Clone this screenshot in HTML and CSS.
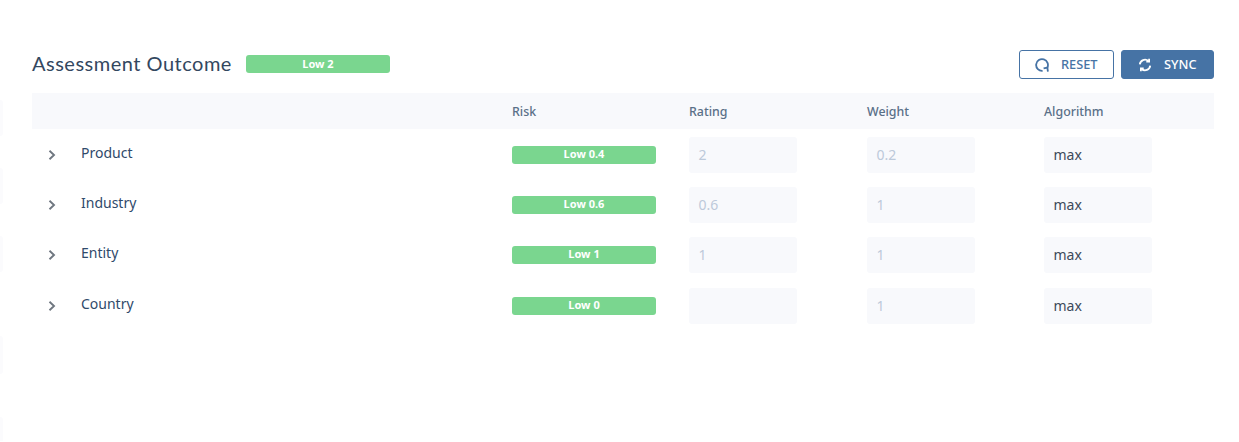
FILE: index.html
```html
<!DOCTYPE html>
<html lang="en">
<head>
<meta charset="utf-8">
<title>Assessment Outcome</title>
<link rel="stylesheet" href="styles.css">
</head>
<body>
<div class="edge"><i></i><i></i><i></i><i></i><i></i></div>
<main class="panel">
  <header class="head">
    <h1 class="title">Assessment Outcome</h1>
    <span class="badge badge-main">Low 2</span>
    <div class="actions">
      <button class="btn btn-outline"><svg class="ic" viewBox="0 0 14 14"><path d="M7.6 12.9A5.9 5.9 0 1 1 12.2 9.9"/><path d="M12.9 13.6 12.4 9.6 8.6 10.4"/></svg>RESET</button>
      <button class="btn btn-solid"><svg class="ic" viewBox="0 0 14 14"><path d="M1.8 6.4A5.2 5.2 0 0 1 10.4 3"/><path d="M11.1 .8V3.7H8.3"/><path d="M12.2 7.6A5.2 5.2 0 0 1 3.6 11"/><path d="M2.9 13.2V10.3H5.7"/></svg>SYNC</button>
    </div>
  </header>
  <div class="row row-head">
    <span></span><span>Risk</span><span>Rating</span><span>Weight</span><span>Algorithm</span>
  </div>
  <div class="row item">
    <div class="name"><svg class="chev" viewBox="0 0 8 12"><path d="M1.5 1.8 6 6 1.5 10.2"/></svg><span>Product</span></div>
    <span class="badge">Low 0.4</span>
    <div class="field muted">2</div><div class="field muted">0.2</div><div class="field">max</div>
  </div>
  <div class="row item">
    <div class="name"><svg class="chev" viewBox="0 0 8 12"><path d="M1.5 1.8 6 6 1.5 10.2"/></svg><span>Industry</span></div>
    <span class="badge">Low 0.6</span>
    <div class="field muted">0.6</div><div class="field muted">1</div><div class="field">max</div>
  </div>
  <div class="row item">
    <div class="name"><svg class="chev" viewBox="0 0 8 12"><path d="M1.5 1.8 6 6 1.5 10.2"/></svg><span>Entity</span></div>
    <span class="badge">Low 1</span>
    <div class="field muted">1</div><div class="field muted">1</div><div class="field">max</div>
  </div>
  <div class="row item">
    <div class="name"><svg class="chev" viewBox="0 0 8 12"><path d="M1.5 1.8 6 6 1.5 10.2"/></svg><span>Country</span></div>
    <span class="badge">Low 0</span>
    <div class="field muted"></div><div class="field muted">1</div><div class="field">max</div>
  </div>
</main>
</body>
</html>
```
FILE: styles.css
```css
* { box-sizing: border-box; }
html, body { margin: 0; background: #fff; }
body { position: relative; height: 442px; overflow: hidden; font-family: "Noto Sans", "Open Sans", sans-serif; color: #2f4a6b; }
.edge { position: absolute; left: 0; top: 100px; width: 3px; height: 342px; overflow: hidden; display: flex; flex-direction: column; }
.edge i { display: block; flex: none; height: 36px; margin-bottom: 32px; background: #fbfbfd; border-radius: 0 3px 3px 0; }
.edge i:nth-child(3) { margin-bottom: 64px; }
.edge i:nth-child(4) { height: 38px; margin-bottom: 43px; }
.edge i:nth-child(5) { height: 24px; margin-bottom: 0; border-bottom-right-radius: 0; }
.panel { padding: 50px 25px 0 32px; }
.head { display: flex; align-items: center; height: 29px; margin-bottom: 14px; }
.title { margin: 0 14px 2px 0; font: 400 20px/29px Lato, sans-serif; color: #33475f; letter-spacing: .5px; }
.badge { display: block; width: 144px; height: 18px; border-radius: 3px; background: #7ad68f; color: #fff; font: 700 11px/15px "Noto Sans", sans-serif; text-align: center; }
.badge-main { margin-bottom: 2px; line-height: 17px; }
.actions { margin-left: auto; display: flex; gap: 7px; }
.btn { display: flex; align-items: center; justify-content: center; height: 29px; border-radius: 3px; font: 500 12.8px/1 "Noto Sans", sans-serif; padding: 0; }
.btn-outline { width: 95px; background: #fff; color: #4673a5; border: 1px solid #4673a5; }
.btn-solid { width: 93px; background: #4673a5; color: #fff; border: 1px solid #4673a5; }
.ic { width: 14px; height: 14px; margin-right: 11.5px; fill: none; stroke: currentColor; stroke-width: 1.8; }
.row { display: grid; grid-template-columns: 480px 177px 178px 177px 1fr; align-items: center; }
.row-head { height: 36px; background: #f8f9fc; font-size: 12.4px; font-weight: 500; color: #5a7088; }
.item { height: 36px; margin-top: 8px; }
.item + .item { margin-top: 14.2px; }
.name { display: flex; align-items: center; font-size: 14px; color: #2f4a6b; }
.name span { margin-top: -5px; }
.chev { width: 8px; height: 12px; margin: 0 25px 0 16px; fill: none; stroke: #6f7780; stroke-width: 1.9; }
.field { width: 108px; height: 36px; border-radius: 3px; background: #f8f9fc; padding-left: 9.5px; font-size: 14px; line-height: 35px; color: #3d4a5a; }
.muted { color: #bdc9da; }
```
